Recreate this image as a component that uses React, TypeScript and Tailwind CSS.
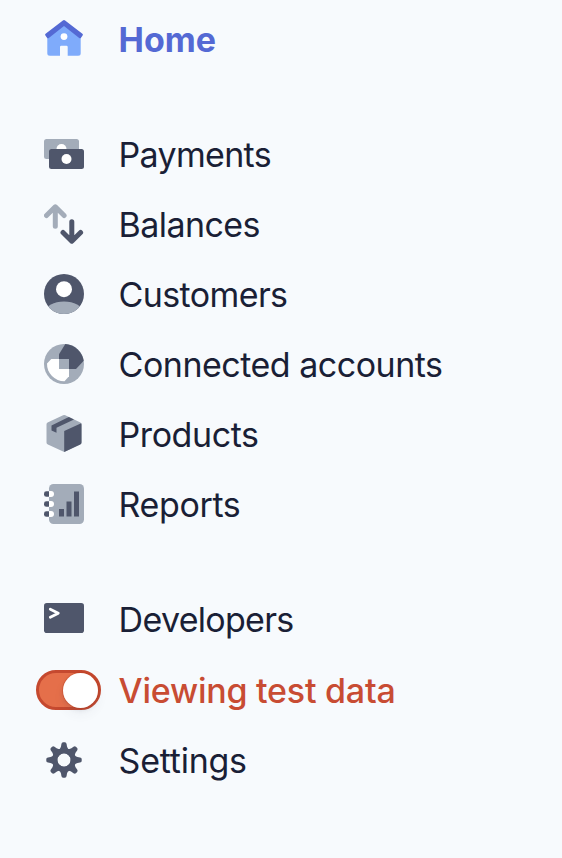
import type { ReactNode } from 'react';
import { clsx } from 'clsx';

const DARK = '#4f566b';
const LIGHT = '#a3acb9';

function Icon({ children }: { children: ReactNode }) {
  return (
    <svg viewBox="0 0 40 40" className="h-10 w-10 shrink-0" aria-hidden="true">
      {children}
    </svg>
  );
}

const HomeIcon = () => (
  <Icon>
    <path d="M20 6 3.3 19v15.2a2.5 2.5 0 0 0 2.5 2.5H16V28a1.3 1.3 0 0 1 1.3-1.3h5.1a1.3 1.3 0 0 1 1.3 1.3v8.7h10.5a2.5 2.5 0 0 0 2.5-2.5V19Z" fill="#7fabfb" />
    <path
      d="M18.9 1.4a1.8 1.8 0 0 1 2.2 0L38.4 14.8a1.3 1.3 0 0 1 .2 1.8l-1.6 2.1a1.3 1.3 0 0 1-1.8.2L20 7.1 4.8 18.9a1.3 1.3 0 0 1-1.8-.2L1.4 16.6a1.3 1.3 0 0 1 .2-1.8Z"
      fill="#5469d4"
    />
    <circle cx="20" cy="17.6" r="3.4" fill="#fff" />
  </Icon>
);

const PaymentsIcon = () => (
  <Icon>
    <rect y="5" width="35" height="20" rx="2.5" fill={LIGHT} />
    <circle cx="17.5" cy="15" r="5" fill="#fff" />
    <rect x="5" y="15" width="35" height="20" rx="2.5" fill={DARK} />
    <circle cx="22.5" cy="25" r="5" fill="#fff" />
  </Icon>
);

const BalancesIcon = () => (
  <Icon>
    <g fill="none" strokeWidth="5" strokeLinecap="round" strokeLinejoin="round">
      <path d="M11.3 22.3V3M2.5 11.6l8.8-8.8 8.8 8.8" stroke={LIGHT} />
      <path d="M27.8 17.7V37M19 28.4l8.8 8.8 8.8-8.8" stroke={DARK} />
    </g>
  </Icon>
);

const CustomersIcon = () => (
  <Icon>
    <clipPath id="customer-disc"><circle cx="20" cy="20" r="20" /></clipPath>
    <g clipPath="url(#customer-disc)">
      <rect width="40" height="40" fill={DARK} />
      <ellipse cx="20" cy="38" rx="18.5" ry="10.5" fill={LIGHT} />
    </g>
    <circle cx="20" cy="15.2" r="8" fill="#fff" />
  </Icon>
);

const ConnectedIcon = () => (
  <Icon>
    <circle cx="20" cy="20" r="20" fill={LIGHT} />
    <path d="M15 25V10.2L21.3 0A20 20 0 0 1 39.7 16.8L32 25Z" fill={DARK} />
    <path d="M25 15H7.3L3 19.5A17.2 17.2 0 0 0 20.5 37.2L25 32.2Z" fill="#fff" />
    <path d="M15 15h10v10H15Z" fill={LIGHT} />
  </Icon>
);

const ProductsIcon = () => (
  <Icon>
    <path d="M19.1 1.3a2.5 2.5 0 0 1 2.2 0L36.4 8.6a2 2 0 0 1 1.1 1.8v18.1a2.3 2.3 0 0 1-1.3 2.1L20.2 38 3.9 30.6a2.3 2.3 0 0 1-1.4-2.1V10.4a2 2 0 0 1 1.1-1.8Z" fill={LIGHT} />
    <path d="M20.2 17 37.2 9.2l.3 1.2v18.1a2.3 2.3 0 0 1-1.3 2.1L20.2 38Z" fill={DARK} />
    <path d="M7.5 11.4 24.8 2.9l5.2 2.5-17.5 8.3v5L7.5 16.4Z" fill={DARK} />
  </Icon>
);

const ReportsIcon = () => (
  <Icon>
    <rect x="5" width="35" height="40" rx="4.5" fill={LIGHT} />
    {[10, 20, 30].map((y) => (
      <g key={y}>
        <rect y={y - 2.8} width="7" height="5.6" rx="2.4" fill={DARK} />
        <path d={`M5 ${y - 3}h2a3 3 0 0 1 0 6H5Z`} fill="#fff" />
      </g>
    ))}
    <path d="M15 25h5v7.5h-5ZM22.5 17.5h5v15h-5ZM30 7.5h5v25h-5Z" fill={DARK} />
  </Icon>
);

const DevelopersIcon = () => (
  <Icon>
    <rect y="5" width="40" height="30" rx="2.8" fill={DARK} />
    <path d="m6.3 11.2 8 4-8 4" fill="none" stroke="#fff" strokeWidth="2.8" strokeLinecap="round" strokeLinejoin="round" />
  </Icon>
);

const SettingsIcon = () => (
  <Icon>
    <g fill={DARK}>
      {[0, 45, 90, 135, 180, 225, 270, 315].map((angle) => (
        <path key={angle} transform={`rotate(${angle} 20 20)`} d="M14 11 Q16.4 9.2 17 6.5L17.4 4q.3-1.7 1.7-1.7h1.8q1.4 0 1.7 1.7l.4 2.5Q23.6 9.2 26 11L20 15Z" />
      ))}
    </g>
    <circle cx="20" cy="20" r="9.2" fill="none" stroke={DARK} strokeWidth="5.8" />
    <circle cx="20" cy="20" r="6.4" fill="#f7fafc" />
  </Icon>
);

function Toggle() {
  return (
    <span className="-mx-2 flex h-10 w-[65px] shrink-0 items-center justify-end rounded-full border-[3px] border-[#c5492f] bg-[#e56f4a]">
      <span className="-my-1 h-[35px] w-[35px] shrink-0 rounded-full bg-white shadow-[0_0_0_1px_rgba(190,60,30,0.35),0_2px_4px_rgba(60,66,87,0.12),0_6px_12px_rgba(60,66,87,0.06)]" />
    </span>
  );
}

interface RowProps {
  icon: ReactNode;
  label: string;
  className?: string;
  labelClassName?: string;
}

function Row({ icon, label, className, labelClassName = 'pt-px' }: RowProps) {
  return (
    <li className={clsx('flex h-[70px] items-center', className)}>
      <span className="flex w-[74.6px] shrink-0">{icon}</span>
      <span className={clsx('whitespace-nowrap', labelClassName)}>{label}</span>
    </li>
  );
}

export default function App() {
  return (
    <nav className="h-[858px] w-[562px] overflow-hidden bg-[#f7fafd] pl-11 pt-1 font-['Inter',sans-serif] text-[34px] leading-[40px] text-[#1a1f36]">
      <ul>
        <Row icon={<HomeIcon />} label="Home" className="font-bold text-[#5469d4]" />
      </ul>
      <ul className="mt-[45px]">
        <Row icon={<PaymentsIcon />} label="Payments" className="tracking-[-0.69px]" />
        <Row icon={<BalancesIcon />} label="Balances" className="tracking-[-0.57px]" />
        <Row icon={<CustomersIcon />} label="Customers" className="tracking-[-0.62px]" />
        <Row icon={<ConnectedIcon />} label="Connected accounts" className="tracking-[-0.5px]" />
        <Row icon={<ProductsIcon />} label="Products" className="tracking-[-0.44px]" />
        <Row icon={<ReportsIcon />} label="Reports" className="tracking-[-0.38px]" />
      </ul>
      <ul className="mt-[44px]">
        <Row icon={<DevelopersIcon />} label="Developers" className="tracking-[-0.7px]" labelClassName="pt-[3px]" />
        <Row icon={<Toggle />} label="Viewing test data" className="mt-0.5 font-medium tracking-[-0.24px] text-[#c84c33]" />
        <Row icon={<SettingsIcon />} label="Settings" className="tracking-[-0.25px]" />
      </ul>
    </nav>
  );
}
